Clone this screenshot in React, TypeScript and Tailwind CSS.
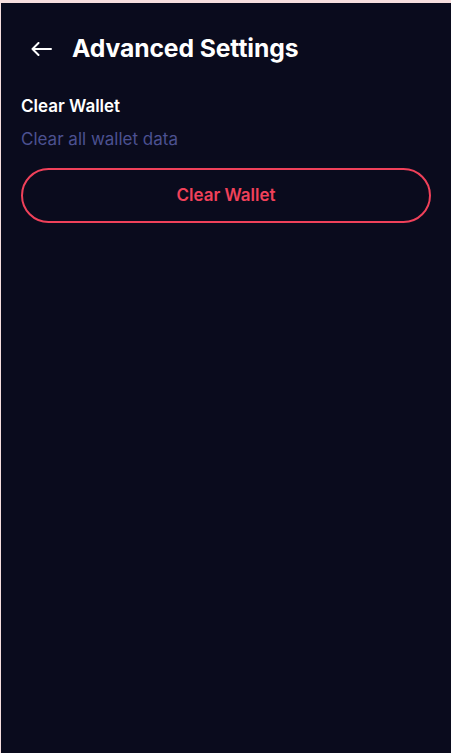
export default function App() {
  return (
    <div className="min-h-[753px] w-[451px] bg-[#f6dede] pt-[3px] pl-px">
      <div
        className="flex min-h-[750px] flex-col bg-[#0a0b1d] px-5 text-white"
        style={{ fontFamily: "Inter, 'Noto Sans', sans-serif" }}
      >
        {/* Header */}
        <div className="flex items-center gap-[20px] pt-[27px] pl-[10px]">
          <svg width="21" height="14" viewBox="0 0 21 14" fill="none" stroke="currentColor" strokeWidth="2" strokeLinecap="round" strokeLinejoin="round">
            <path d="M20 7H1.5M7.5 1L1.5 7l6 6" />
          </svg>
          <h1 className="text-[24.7px] font-bold tracking-[-0.1px]">Advanced Settings</h1>
        </div>

        {/* Clear wallet section */}
        <div className="mt-[29px] flex flex-col">
          <span className="text-[17px] font-semibold leading-5">Clear Wallet</span>
          <span className="mt-[13px] text-[17px] leading-5 text-[#4c5191]">Clear all wallet data</span>
          <button className="mt-[19px] h-[55px] w-full rounded-full border-2 border-[#f0415a] text-[17px] font-semibold text-[#f0415a]">
            Clear Wallet
          </button>
        </div>
      </div>
    </div>
  );
}
